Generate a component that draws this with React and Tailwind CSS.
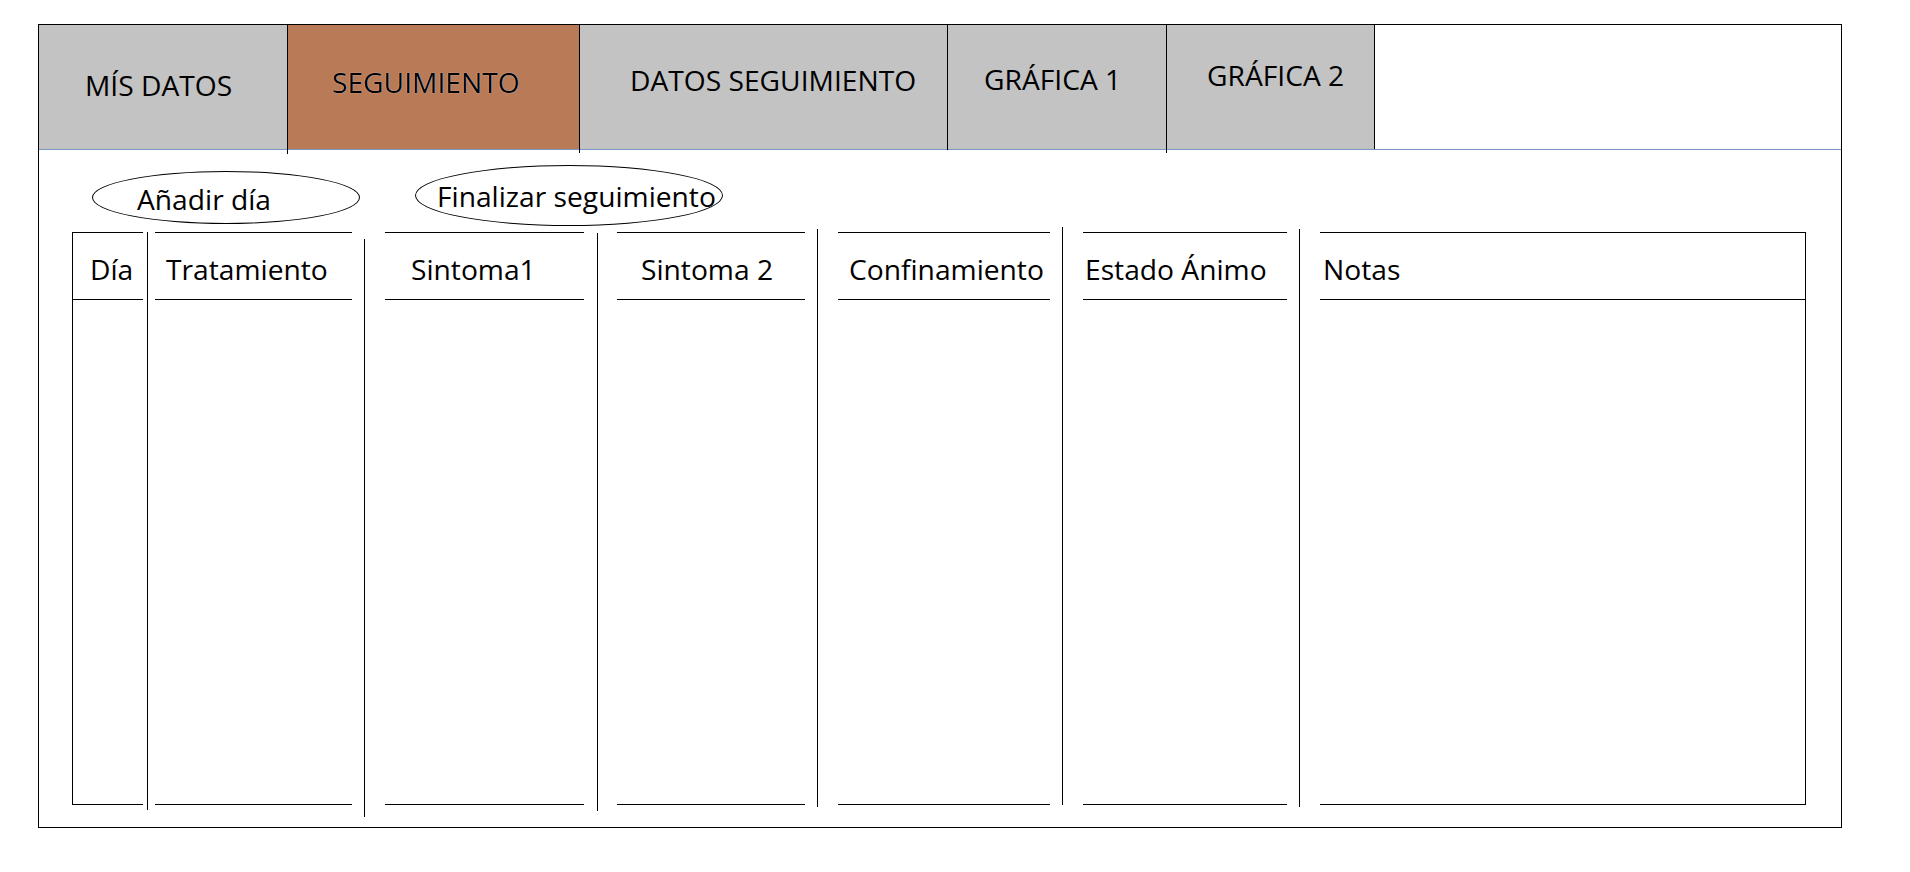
import React from "react";

const tabs = [
  { label: "MÍS DATOS", box: "w-[248px] bg-[#c3c3c3] pl-[46px] pt-[46px]", line: "h-[129px] -mb-[4px]" },
  { label: "SEGUIMIENTO", box: "w-[291px] bg-[#b87a57] pl-[44px] pt-[43px] [text-shadow:0_0_1px_#ffffff]", line: "h-[128px] -mb-[3px]" },
  { label: "DATOS SEGUIMIENTO", box: "w-[367px] bg-[#c3c3c3] pl-[50px] pt-[41px]", line: "h-[125px]" },
  { label: "GRÁFICA 1", box: "w-[218px] bg-[#c3c3c3] pl-[36px] pt-[40px]", line: "h-[128px] -mb-[3px]" },
  { label: "GRÁFICA 2", box: "w-[208px] bg-[#c3c3c3] pl-[40px] pt-[36px] border-r border-black", line: null },
];

// each column: gap before separator, separator offsets, column box
const columns = [
  { label: "Día", col: "ml-0 w-[71px] border-l", text: "pl-[17px]", sep: "ml-[4px] mt-[5px]" },
  { label: "Tratamiento", col: "ml-[7px] w-[197px]", text: "pl-[11px]", sep: "ml-[12px] mt-[12px]" },
  { label: "Sintoma1", col: "ml-[20px] w-[199px]", text: "pl-[26px]", sep: "ml-[13px] mt-[6px]" },
  { label: "Sintoma 2", col: "ml-[19px] w-[188px]", text: "pl-[24px]", sep: "ml-[12px] mt-[2px]" },
  { label: "Confinamiento", col: "ml-[20px] w-[212px]", text: "pl-[11px]", sep: "ml-[12px] mt-0" },
  { label: "Estado Ánimo", col: "ml-[20px] w-[204px]", text: "pl-[2px]", sep: "ml-[12px] mt-[2px]" },
  { label: "Notas", col: "ml-[20px] w-[486px] border-r", text: "pl-[3px]", sep: null },
];

function Ellipse({ label, className, textClass }) {
  return (
    <div className={`flex items-start rounded-[50%] border border-black bg-white ${className}`}>
      <span className={`block whitespace-nowrap ${textClass}`}>{label}</span>
    </div>
  );
}

export default function App() {
  return (
    <div
      className="min-h-screen bg-white pt-[24px] pl-[38px] text-black"
      style={{ fontFamily: "'Open Sans', Lato, sans-serif" }}
    >
      <div className="flex h-[804px] w-[1804px] flex-col border border-black text-[28.2px] leading-none">
        {/* TABS */}
        <div className="flex h-[125px] border-b border-[#7d95c2]">
          {tabs.map((t) => (
            <React.Fragment key={t.label}>
              <div className={`flex h-[124px] items-start ${t.box}`}>
                <span className="block whitespace-nowrap">{t.label}</span>
              </div>
              {t.line && <div className={`relative z-10 w-px shrink-0 self-start bg-black ${t.line}`} />}
            </React.Fragment>
          ))}
        </div>

        {/* BUTTONS */}
        <div className="flex h-[77px] items-start">
          <Ellipse
            label="Añadir día"
            className="ml-[53px] mt-[21px] h-[53px] w-[268px]"
            textClass="pl-[44px] pt-[13px]"
          />
          <Ellipse
            label="Finalizar seguimiento"
            className="ml-[55px] mt-[15px] h-[61px] w-[308px]"
            textClass="pl-[21px] pt-[16px]"
          />
        </div>

        {/* TABLE */}
        <div className="ml-[33px] flex items-start">
          {columns.map((c) => (
            <React.Fragment key={c.label}>
              <div className={`mt-[5px] flex h-[573px] shrink-0 flex-col border-y border-black ${c.col}`}>
                <div className={`h-[67px] border-b border-black pt-[22px] ${c.text}`}>
                  <span className="block whitespace-nowrap">{c.label}</span>
                </div>
              </div>
              {c.sep && <div className={`h-[578px] w-px shrink-0 bg-black ${c.sep}`} />}
            </React.Fragment>
          ))}
        </div>
      </div>
    </div>
  );
}
